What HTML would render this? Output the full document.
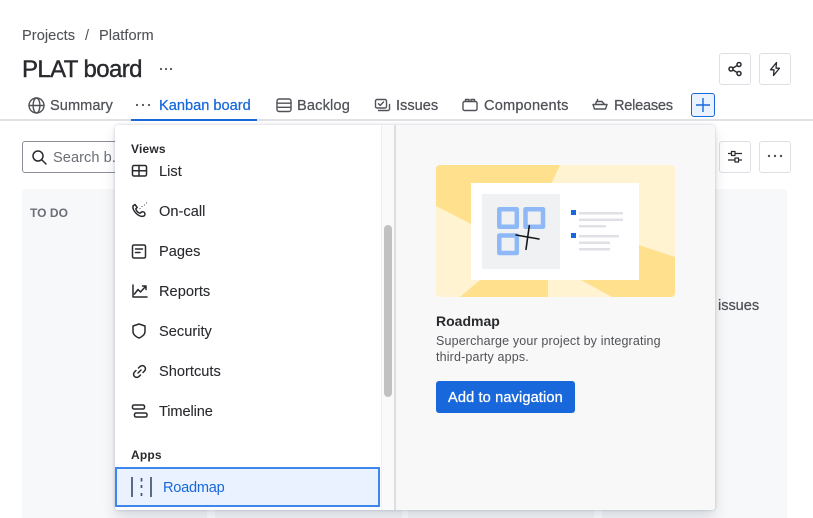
<!DOCTYPE html>
<html><head><meta charset="utf-8"><style>
html,body{margin:0;padding:0;background:#fff}
#r{position:relative;width:813px;height:518px;overflow:hidden;background:#fff;font-family:"Liberation Sans",sans-serif;color:#505258}
#r div,#r span,#r svg{position:absolute}
.t{white-space:nowrap;font-size:14.6px;line-height:20px}
.nav{color:#505258;font-weight:400;-webkit-text-stroke:.25px #505258}
.mi{color:#292a2e;font-size:14.6px;left:159px;white-space:nowrap;line-height:20px;-webkit-text-stroke:.1px #292a2e;letter-spacing:.02px}
.btn{width:30px;height:30px;border:1px solid #dcdfe4;border-radius:3px;background:#fff}
svg{fill:none;stroke:#292a2e;stroke-width:1.5;stroke-linecap:round;stroke-linejoin:round}
.col{top:189px;height:329px;background:#f7f8f9}
.ti{stroke:#505258;stroke-width:1.4}
</style></head><body><div id="r">

<div class="t" style="left:22px;top:26px;letter-spacing:.05px;-webkit-text-stroke:.1px #505258">Projects</div>
<div class="t" style="left:85px;top:26px">/</div>
<div class="t" style="left:99px;top:26px;letter-spacing:.05px;-webkit-text-stroke:.1px #505258">Platform</div>
<div class="t" style="left:22px;top:55px;font-size:24px;line-height:30px;color:#292a2e;-webkit-text-stroke:.4px #292a2e;letter-spacing:-.6px">PLAT board</div>
<svg style="left:159px;top:66px" width="14" height="6"><g fill="#505258" stroke="none"><circle cx="2" cy="3" r="1.1"/><circle cx="7" cy="3" r="1.1"/><circle cx="12" cy="3" r="1.1"/></g></svg>

<div class="btn" style="left:719px;top:53px"></div>
<svg style="left:727px;top:61px;stroke-width:1.5" width="16" height="16"><circle cx="4" cy="8" r="2"/><circle cx="12" cy="3.5" r="2"/><circle cx="12" cy="12.5" r="2"/><path d="M6 7l4.200-2.500M6 9l4.200 2.500"/></svg>
<div class="btn" style="left:759px;top:53px"></div>
<svg style="left:767px;top:61px;stroke-width:1.3" width="16" height="16"><path d="M9.500 1.500L3.500 8.800H7L6.500 14.500 12.500 7.200H9z"/></svg>

<!-- tabs -->
<svg class="ti" style="left:28px;top:97px" width="17" height="17"><circle cx="8.500" cy="8.500" r="7.500"/><ellipse cx="8.500" cy="8.500" rx="3.400" ry="7.500"/><path d="M1 8.500h15"/></svg>
<div class="t nav" style="left:50px;top:96px;letter-spacing:.05px">Summary</div>
<svg style="left:135px;top:102px" width="16" height="6"><g fill="#505258" stroke="none"><circle cx="2" cy="3" r="1.1"/><circle cx="8" cy="3" r="1.1"/><circle cx="14" cy="3" r="1.1"/></g></svg>
<div class="t" style="left:159px;top:96px;color:#1868db;-webkit-text-stroke:.25px #1868db;letter-spacing:0">Kanban board</div>
<svg class="ti" style="left:276px;top:98px" width="16" height="16"><rect x="1" y="1" width="14" height="12.500" rx="2"/><path d="M1 5.200h14M1 9.300h14"/></svg>
<div class="t nav" style="left:297px;top:96px;letter-spacing:.15px">Backlog</div>
<svg class="ti" style="left:374px;top:98px" width="17" height="14"><rect x="1.500" y="1.500" width="11" height="8.500" rx="1.500"/><path d="M4.500 5.700l1.700 1.700L9.500 4M4.500 12.500h9.500a1.500 1.500 0 0 0 1.500-1.500V6.500"/></svg>
<div class="t nav" style="left:396px;top:96px;letter-spacing:0">Issues</div>
<svg class="ti" style="left:462px;top:98px" width="16" height="14"><rect x="1" y="3.500" width="14" height="9" rx="1.500"/><path d="M3.500 3.500V1.500h3.500v2M9 3.500V1.500h3.500v2"/></svg>
<div class="t nav" style="left:484px;top:96px;letter-spacing:.18px">Components</div>
<svg class="ti" style="left:592px;top:98px" width="16" height="14"><path d="M1 6.500h14l-1.500 4.500h-11zM3.500 6.500l1-3h5.500l2.500 3M5.500 3.500V1.500"/></svg>
<div class="t nav" style="left:614px;top:96px;letter-spacing:-.25px">Releases</div>
<div style="left:691px;top:93px;width:22px;height:22px;border:1px solid #1868db;border-radius:3px;background:#e9f2fe"></div>
<svg style="left:695px;top:97px;stroke:#1868db;stroke-width:1.4;stroke-linecap:butt" width="16" height="16"><path d="M8 1v14M1 8h14"/></svg>
<div style="left:0;top:119px;width:813px;height:2px;background:#dfe1e4"></div>
<div style="left:131px;top:119px;width:126px;height:2px;background:#1868db"></div>

<!-- toolbar -->
<div style="left:22px;top:141px;width:120px;height:30px;border:1px solid #8c8f97;border-radius:3px;background:#fff"></div>
<svg style="left:32px;top:150px;stroke-width:1.5" width="15" height="15"><circle cx="6" cy="6" r="5"/><path d="M10 10l4 4"/></svg>
<div class="t" style="left:53px;top:148px;color:#6b6e76;letter-spacing:.05px">Search b...</div>
<div class="btn" style="left:719px;top:141px"></div>
<svg style="left:727px;top:149px;stroke-width:1.2;stroke-linecap:butt" width="16" height="16"><path d="M1 4.500h3.500M8 4.500h7M1 11h7M11.500 11H15"/><rect x="4.500" y="2.500" width="3.500" height="4"/><rect x="8" y="9" width="3.500" height="4"/></svg>
<div class="btn" style="left:759px;top:141px"></div>
<svg style="left:766px;top:153px" width="18" height="6"><g fill="#505258" stroke="none"><circle cx="3" cy="3" r="1.200"/><circle cx="9" cy="3" r="1.200"/><circle cx="15" cy="3" r="1.200"/></g></svg>

<!-- columns -->
<div class="col" style="left:22px;width:185px;border-radius:3px 0 0 0"></div>
<div class="col" style="left:215px;width:187px"></div>
<div class="col" style="left:408px;width:186px"></div>
<div class="col" style="left:602px;width:185px;border-radius:0 3px 0 0"></div>
<div class="t" style="left:30px;top:203px;font-size:12px;color:#6b6e76;font-weight:700;letter-spacing:.05px">TO DO</div>
<div class="t nav" style="left:718px;top:296px;letter-spacing:-.05px">issues</div>

<!-- popup -->
<div style="left:115px;top:125px;width:600px;height:385px;background:#fff;border-radius:3px;box-shadow:0 8px 14px rgba(9,30,66,.13),0 0 3px rgba(9,30,66,.2)"></div>
<div style="left:381px;top:125px;width:14px;height:385px;background:#fafafa;border-left:1px solid #eeeff1;box-sizing:border-box"></div>
<div style="left:394px;top:125px;width:2px;height:385px;background:#dcdfe2"></div>
<div style="left:396px;top:125px;width:319px;height:385px;background:#f8f8f8;border-radius:0 3px 3px 0"></div>
<div style="left:384px;top:225px;width:8px;height:172px;background:#c1c1c1;border-radius:4px"></div>

<div class="t" style="left:131px;top:139px;font-size:12px;font-weight:700;color:#292a2e;letter-spacing:.2px">Views</div>
<svg style="left:131px;top:164px" width="17" height="14"><rect x="1.500" y="1.500" width="14" height="10.500" rx="1.500"/><path d="M1.500 6.700h14M8 1.500v10.500"/></svg>
<div class="mi" style="top:162px">List</div>
<svg style="left:131px;top:202px" width="17" height="18"><path d="M2 4l2-1.500 2.200 3-1.400 1.300c.5 2 2.200 3.800 4.200 4.500l1.200-1"/><path d="M10.200 10.300a2.300 2.300 0 1 1 2 4c-5 .8-11-5.800-10.200-10.300"/><path d="M9 6.500h.01M11 4.500h.01M13.500 3h.01M15.500 1h.01" stroke-width="1.100"/></svg>
<div class="mi" style="top:202px">On-call</div>
<svg style="left:131px;top:244px" width="16" height="15"><rect x="1.500" y="1" width="13" height="13" rx="1.500"/><path d="M4.500 5h7M4.500 8.500h4.500"/></svg>
<div class="mi" style="top:242px">Pages</div>
<svg style="left:132px;top:284px" width="16" height="14"><path d="M1 1v12h14M2.500 10L6 5.500 8.500 8 13.500 2.500M10.500 2H14V5.500"/></svg>
<div class="mi" style="top:282px">Reports</div>
<svg style="left:132px;top:323px" width="14" height="16"><path d="M7 1l6 2v5.500c0 3-3 5.500-6 6.500-3-1-6-3.500-6-6.500V3z"/></svg>
<div class="mi" style="top:322px">Security</div>
<svg style="left:132px;top:364px" width="15" height="15"><path d="M6 9l3-3M6.500 4l1.500-1.500a3 3 0 0 1 4.500 4.500L11 8.500M8.500 11L7 12.500A3 3 0 0 1 2.500 8L4 6.500"/></svg>
<div class="mi" style="top:362px">Shortcuts</div>
<svg style="left:131px;top:404px" width="17" height="15"><rect x="1.500" y="1" width="12" height="4" rx="1.500"/><rect x="3.500" y="9" width="12.500" height="4" rx="1.500"/></svg>
<div class="mi" style="top:402px;letter-spacing:-.1px">Timeline</div>
<div class="t" style="left:131px;top:445px;font-size:12px;font-weight:700;color:#292a2e;letter-spacing:.2px">Apps</div>

<div style="left:115px;top:467px;width:265px;height:40px;box-sizing:border-box;background:#e9f2fe;border:2px solid #3d86ec"></div>
<svg style="left:130px;top:476px;stroke:#44546f;stroke-width:1.700;stroke-linecap:butt" width="24" height="22"><path d="M2 1v20M21 1v20"/><path d="M11.500 2v3.500M11.500 9v3M11.500 17v3"/></svg>
<div class="t" style="left:163px;top:478px;color:#1868db;letter-spacing:-.25px">Roadmap</div>

<!-- illustration -->
<svg style="left:436px;top:165px;stroke:none" width="239" height="132" viewBox="0 0 239 132">
<rect width="239" height="132" rx="4" fill="#fff3d1"/>
<path d="M4 0H124L110 30 35 59 0 41V4A4 4 0 0 1 4 0z" fill="#ffe08d"/>
<path d="M24 132L44 115H112V132z" fill="#ffe08d"/>
<path d="M145 115H203V80L239 92V128a4 4 0 0 1-4 4H176z" fill="#ffe08d"/>
<rect x="35" y="18" width="168" height="97" fill="#fff"/>
<rect x="46" y="29" width="78" height="75" fill="#f0f1f3"/>
<g fill="none" stroke="#8fb8f6" stroke-width="4.500"><rect x="63.300" y="44.300" width="17.500" height="17.500"/><rect x="89.500" y="44.300" width="17.500" height="17.500"/><rect x="63.300" y="70.500" width="17.500" height="17.500"/></g>
<path d="M93.300 60.700L90 84.300M80 70l23 4" fill="none" stroke="#16181b" stroke-width="1.600"/>
<rect x="135" y="45" width="5" height="5" fill="#1868db"/><rect x="135" y="68" width="5" height="5" fill="#1868db"/>
<g fill="#dfe1e5"><rect x="143" y="47" width="44" height="2.500"/><rect x="143" y="53.500" width="44" height="2.500"/><rect x="143" y="60" width="27" height="2.500"/><rect x="143" y="70" width="40" height="2.500"/><rect x="143" y="76.500" width="31" height="2.500"/><rect x="143" y="83" width="31" height="2.500"/></g>
</svg>

<div class="t" style="left:436px;top:311px;font-size:14px;font-weight:700;color:#292a2e;letter-spacing:0">Roadmap</div>
<div class="t" style="left:436px;top:333px;font-size:12.5px;color:#505258;letter-spacing:.15px;line-height:16px">Supercharge your project by integrating<br>third-party apps.</div>
<div style="left:436px;top:381px;width:139px;height:32px;background:#1868db;border-radius:3px"></div>
<div class="t" style="left:448px;top:388px;color:#fff;-webkit-text-stroke:.3px #fff;letter-spacing:.12px">Add to navigation</div>
</div></body></html>
